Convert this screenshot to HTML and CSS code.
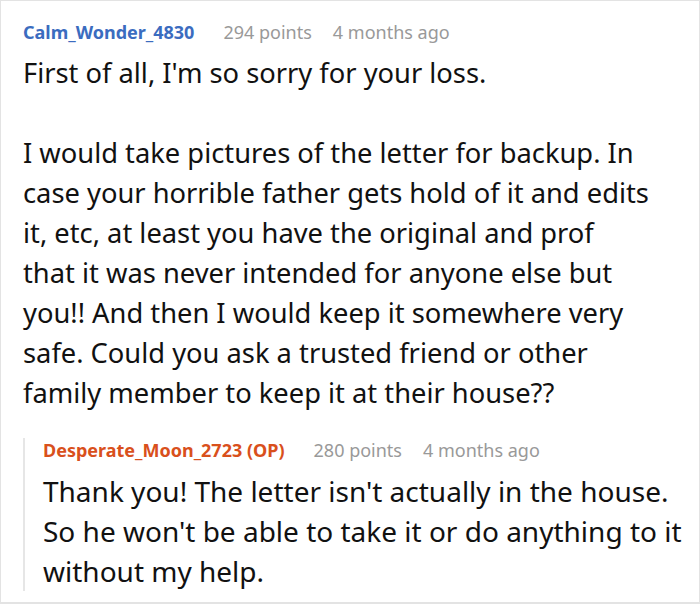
FILE: index.html
```html
<!DOCTYPE html>
<html>
<head>
<meta charset="utf-8">
<link rel="stylesheet" href="styles.css">
</head>
<body>
<div class="frame">
  <div class="comment">
    <div class="meta">
      <span class="user">Calm_Wonder_4830</span>
      <span class="info">294 points</span>
      <span class="info">4 months ago</span>
    </div>
    <div class="text main">
      <p>First of all, I'm so sorry for your loss.</p>
      <p>I would take pictures of the letter for backup. In<br>case your horrible father gets hold of it and edits<br>it, etc, at least you have the original and prof<br>that it was never intended for anyone else but<br>you!! And then I would keep it somewhere very<br>safe. Could you ask a trusted friend or other<br>family member to keep it at their house??</p>
    </div>
    <div class="reply">
      <div class="meta">
        <span class="user op">Desperate_Moon_2723 (OP)</span>
        <span class="info">280 points</span>
        <span class="info">4 months ago</span>
      </div>
      <div class="text">
        <p>Thank you! The letter isn't actually in the house.<br>So he won't be able to take it or do anything to it<br>without my help.</p>
      </div>
    </div>
  </div>
</div>
</body>
</html>
```
FILE: styles.css
```css
html, body {
  margin: 0;
  padding: 0;
  background: #fff;
}
.frame {
  width: 698px;
  height: 601px;
  border: 1px solid #e3e3e3;
  border-bottom-width: 2px;
  overflow: hidden;
  font-family: "Noto Sans", sans-serif;
}
.comment {
  padding: 19px 0 0 22px;
}
.meta {
  display: flex;
  align-items: baseline;
  font-size: 18px;
  line-height: 24px;
  color: #999;
}
.user {
  font-weight: bold;
  color: #3b6cbf;
  margin-right: 29px;
}
.user.op {
  color: #d9501c;
}
.info {
  margin-right: 21px;
}
.text {
  margin-top: 9px;
  font-size: 28px;
  line-height: 40px;
  color: #111;
  white-space: nowrap;
}
.text.main {
  font-size: 27.3px;
}
.text p {
  margin: 0 0 40px;
}
.text p:last-child {
  margin-bottom: 0;
}
.reply {
  margin-top: 35px;
  padding-left: 18px;
  border-left: 2px solid #e6e6e6;
}
.reply .meta {
  margin-top: -10px;
}
.reply .text {
  margin-top: 9px;
  margin-bottom: -8px;
}
```
